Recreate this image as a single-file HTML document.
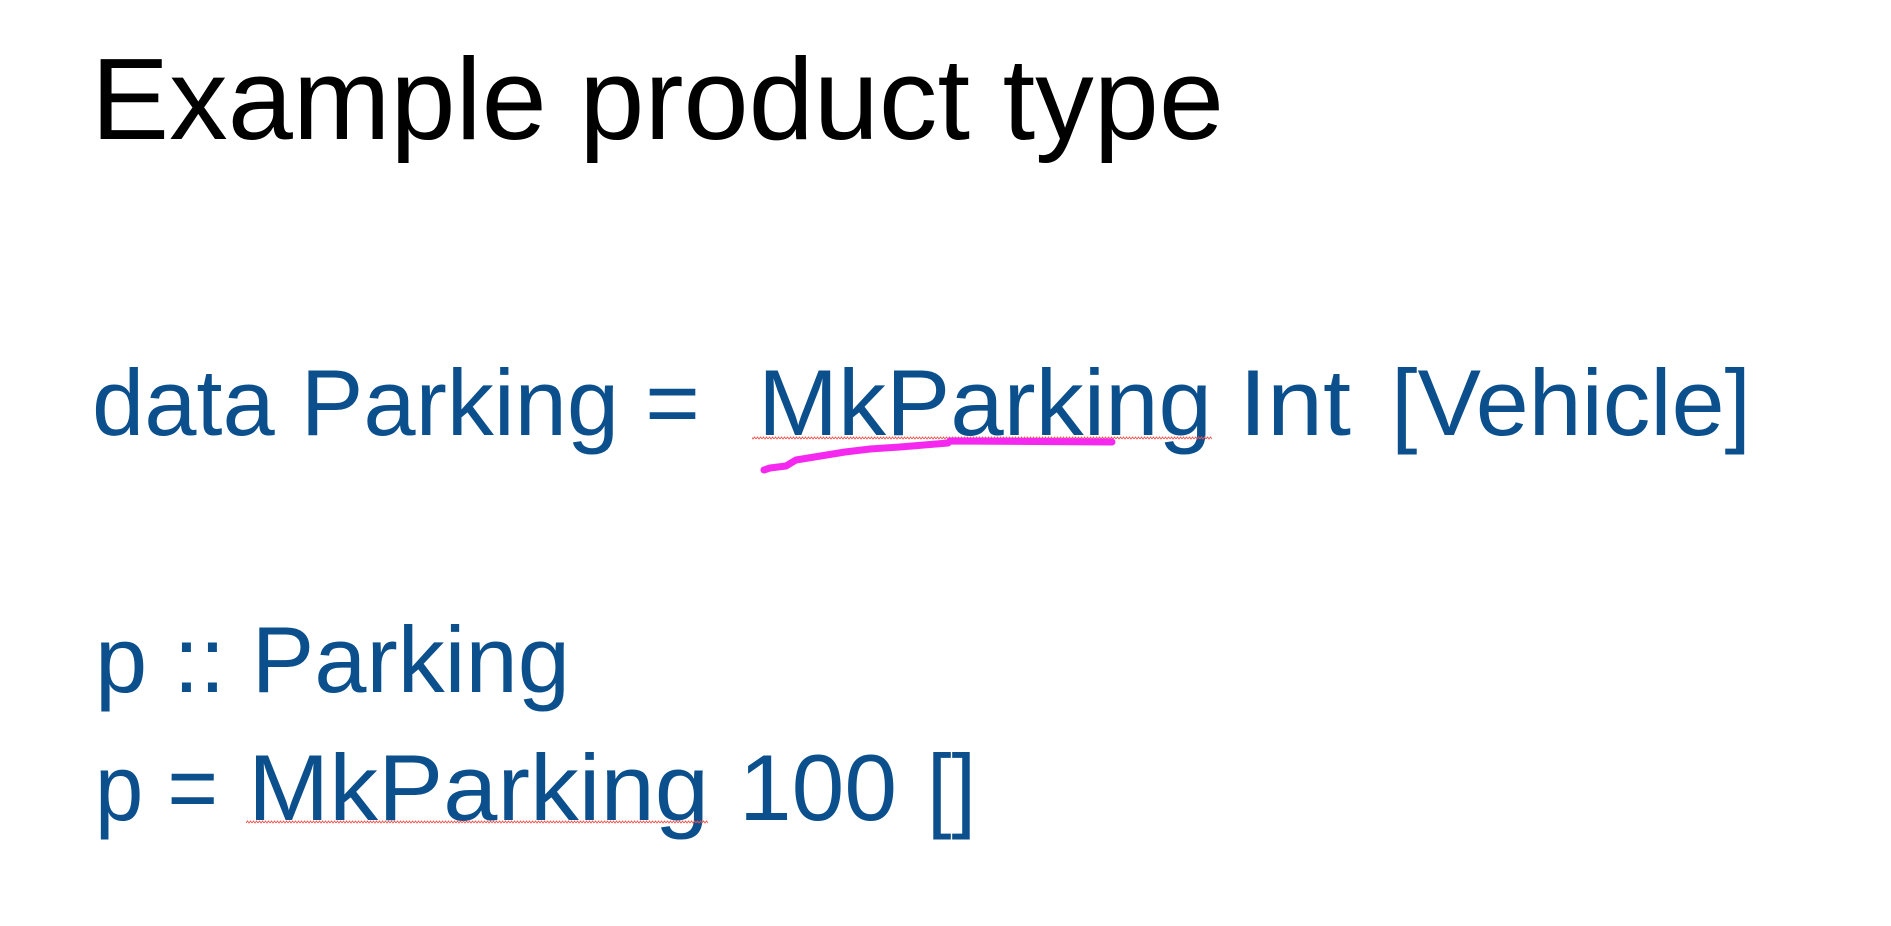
<!DOCTYPE html>
<html><head><meta charset="utf-8"><style>
html,body{margin:0;padding:0;background:#fff;}
svg{display:block;}
text{font-family:"Liberation Sans",sans-serif;}
</style></head><body>
<svg width="1891" height="926" viewBox="0 0 1891 926" xmlns="http://www.w3.org/2000/svg">
<defs>
<pattern id="sq" width="6" height="4" patternUnits="userSpaceOnUse">
<path d="M0 3 L1.5 1 L3 3 L4.5 1 L6 3" fill="none" stroke="#f2534d" stroke-width="0.9"/>
</pattern>
</defs>
<text x="91" y="139" font-size="116" fill="#000" textLength="1133" lengthAdjust="spacingAndGlyphs">Example product type</text>
<g fill="#0b4f8c" font-size="94" lengthAdjust="spacingAndGlyphs">
<text x="92" y="435" textLength="608" lengthAdjust="spacingAndGlyphs">data Parking =</text>
<text x="758" y="435" textLength="454" lengthAdjust="spacingAndGlyphs">MkParking</text>
<text x="1239" y="435" textLength="112" lengthAdjust="spacingAndGlyphs">Int</text>
<text x="1391" y="435" textLength="360" lengthAdjust="spacingAndGlyphs">[Vehicle]</text>
<text x="95" y="692" textLength="475" lengthAdjust="spacingAndGlyphs">p :: Parking</text>
<text x="95" y="820" textLength="123" lengthAdjust="spacingAndGlyphs">p =</text>
<text x="248" y="820" textLength="461" lengthAdjust="spacingAndGlyphs">MkParking</text>
<text x="739" y="820" textLength="158" lengthAdjust="spacingAndGlyphs">100</text>
<text x="927" y="820" textLength="49" lengthAdjust="spacingAndGlyphs">[]</text>
</g>
<rect x="752" y="436" width="460" height="4" fill="url(#sq)"/>
<rect x="246" y="820" width="462" height="4" fill="url(#sq)"/>
<path d="M764 470 L770 468 L786 466 L796 460 L845 452 L870 449 L900 447 L948 443 L950 441 L1112 442" fill="none" stroke="#f528f0" stroke-width="7" stroke-linecap="round" stroke-linejoin="round"/>
</svg>
</body></html>
